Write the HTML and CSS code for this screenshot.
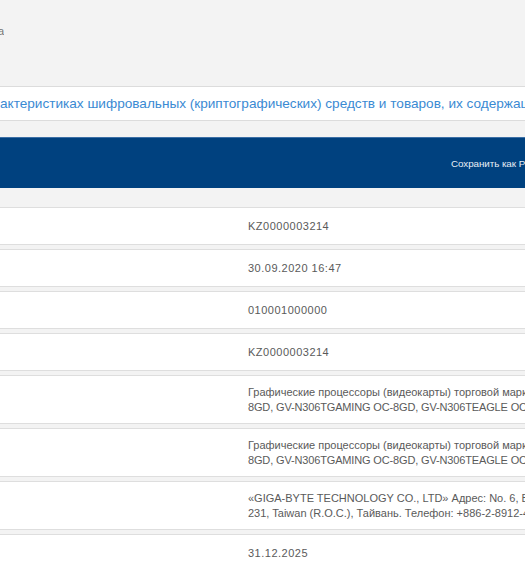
FILE: index.html
```html
<!DOCTYPE html>
<html lang="ru">
<head>
<meta charset="utf-8">
<title>Сведения о характеристиках шифровальных средств</title>
<link rel="stylesheet" href="styles.css">
</head>
<body>
<div class="page">
  <div class="top">
    <div class="crumb"><span class="crumb-text">Главная / Реестр нотификаций / Карточка нотификации / Страница</span></div>
  </div>
  <div class="linkbar">
    <a class="link" href="#"><span class="cut"><span class="cut-text">Сведения о хар</span></span><span>актеристиках шифровальных (криптографических) средств и товаров, их содержащих</span></a>
  </div>
  <div class="toolbar">
    <button class="pdf" type="button">Сохранить как PDF</button>
  </div>
  <div class="rows">
    <div class="row"><div class="label">Регистрационный номер</div><div class="value num">KZ0000003214</div></div>
    <div class="row"><div class="label">Дата регистрации</div><div class="value num">30.09.2020 16:47</div></div>
    <div class="row"><div class="label">Код страны</div><div class="value num">010001000000</div></div>
    <div class="row"><div class="label">Номер нотификации</div><div class="value num">KZ0000003214</div></div>
    <div class="row"><div class="label">Наименование</div><div class="value"><span class="line">Графические процессоры (видеокарты) торговой марки GIGABYTE, модели: GV-N306TAORUS E-</span><span class="line latin">8GD, GV-N306TGAMING OC-8GD, GV-N306TEAGLE OC-8GD, GV-N306TEAGLE-8GD</span></div></div>
    <div class="row"><div class="label">Описание</div><div class="value"><span class="line">Графические процессоры (видеокарты) торговой марки GIGABYTE, модели: GV-N306TAORUS E-</span><span class="line latin">8GD, GV-N306TGAMING OC-8GD, GV-N306TEAGLE OC-8GD, GV-N306TEAGLE-8GD</span></div></div>
    <div class="row"><div class="label">Изготовитель</div><div class="value"><span class="line">«GIGA-BYTE TECHNOLOGY CO., LTD» Адрес: No. 6, Bao Chiang Road, Hsin-Tien Dist., New Taipei City</span><span class="line">231, Taiwan (R.O.C.), Тайвань. Телефон: +886-2-8912-4000</span></div></div>
    <div class="row"><div class="label">Срок действия</div><div class="value num">31.12.2025</div></div>
  </div>
</div>
</body>
</html>
```
FILE: styles.css
```css
html, body {
  margin: 0;
  padding: 0;
  background: #f3f3f3;
  overflow: hidden;
}
body {
  font-family: "Liberation Sans", Arial, sans-serif;
  color: #555;
}
.page {
  width: 1000px;
}
.top {
  height: 86px;
  display: flex;
  align-items: flex-start;
}
.crumb {
  width: 4px;
  margin-top: 24px;
  overflow: hidden;
  display: flex;
  justify-content: flex-end;
}
.crumb-text {
  white-space: nowrap;
  font-size: 11px;
  line-height: 14px;
  color: #777;
}
.linkbar {
  background: #fff;
  border-top: 1px solid #dcdcdc;
  border-bottom: 1px solid #dcdcdc;
  height: 33px;
  display: flex;
  align-items: center;
  overflow: hidden;
}
.link {
  display: flex;
  white-space: nowrap;
  color: #3a8ad3;
  text-decoration: none;
  font-size: 13.6px;
}
.cut {
  width: 0;
  display: flex;
  justify-content: flex-end;
}
.cut-text {
  white-space: nowrap;
}
.toolbar {
  margin-top: 16px;
  background: #00417f;
  border-top: 1px solid #3c6fa6;
  height: 50px;
  display: flex;
  align-items: center;
  padding-left: 451px;
}
.pdf {
  background: none;
  border: 0;
  padding: 0;
  margin: 0;
  color: #e8eef6;
  font-family: "Liberation Sans", Arial, sans-serif;
  font-size: 9.8px;
  letter-spacing: -0.05px;
  white-space: nowrap;
  cursor: pointer;
}
.rows {
  margin-top: 19px;
  display: flex;
  flex-direction: column;
  gap: 4px;
}
.row {
  display: grid;
  grid-template-columns: 236px 1fr;
  background: #fff;
  border-top: 1px solid #dedede;
  border-bottom: 1px solid #dedede;
  min-height: 36px;
}
.label {
  visibility: hidden;
  font-size: 11px;
}
.value {
  padding: 8.5px 12px;
  font-size: 11px;
  line-height: 15px;
  color: #5a5a5a;
  white-space: nowrap;
  display: flex;
  flex-direction: column;
  justify-content: center;
}
.value.num {
  letter-spacing: 0.5px;
}
.line {
  display: block;
}
.line.latin {
  letter-spacing: -0.15px;
}
```
